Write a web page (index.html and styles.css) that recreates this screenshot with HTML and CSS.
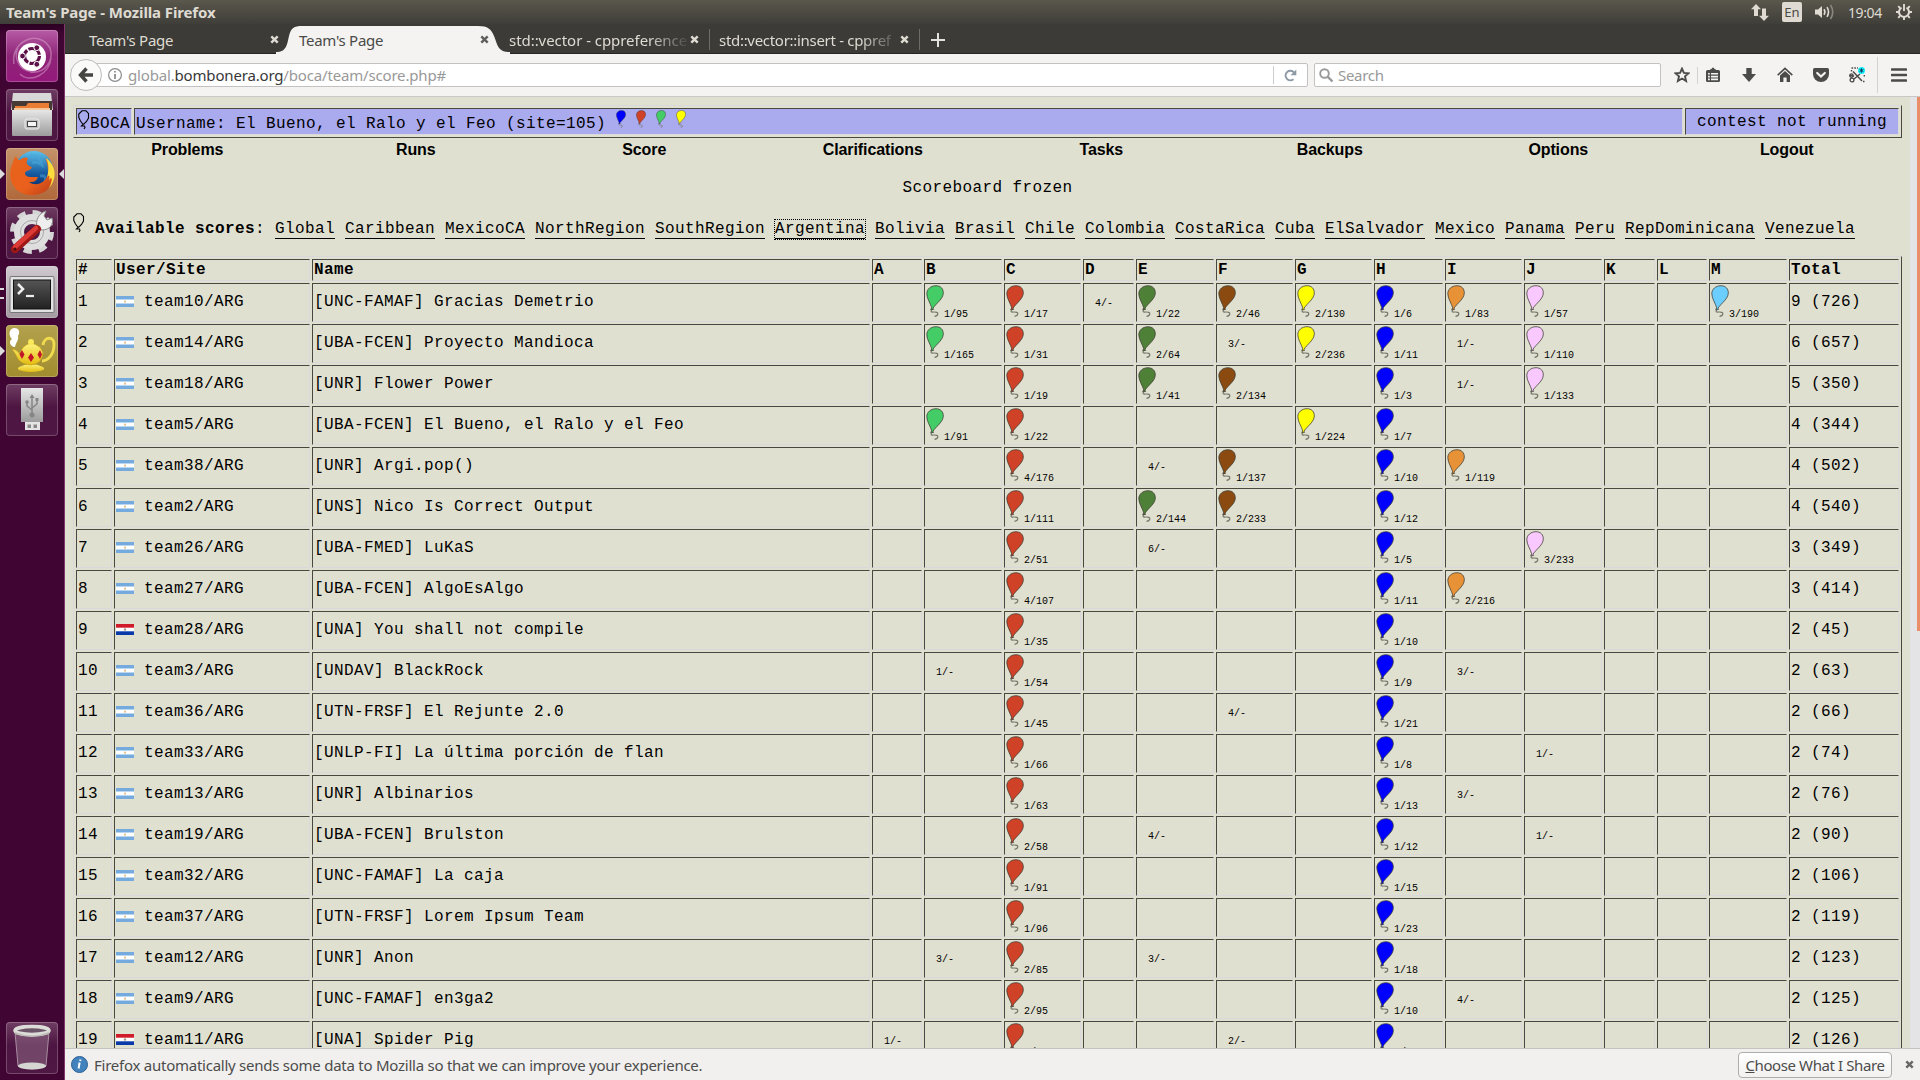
FILE: index.html
```html
<!DOCTYPE html>
<html lang="en">
<head>
<meta charset="utf-8">
<title>Team's Page - Mozilla Firefox</title>
<link rel="stylesheet" href="styles.css">
</head>
<body>
<svg class="defs" width="0" height="0" aria-hidden="true">
  <defs>
    <symbol id="balloon" viewBox="0 0 18 32">
      <path class="string" d="M6.500 24 5 26Q5 27.200 7.500 27Q12 26.800 11.800 28.800 11.500 31 8.500 31.300" fill="none" stroke="#77776c" stroke-width="1.200"/>
      <path d="M10 .7C14.5.7 17.5 3.6 17.3 8.2 17 14 10.5 18 7 23.2L7.6 24.4H4.6L5.8 23C4.3 18 .8 13.5.8 8.6.8 4 5 .7 10 .7Z" fill="currentColor" stroke="#3a3a30" stroke-opacity=".75" stroke-width="1"/>
    </symbol>
    <symbol id="outline-balloon" viewBox="0 0 12 20">
      <path d="M4 .8H8L10.5 3.5V8L8.5 11.5 6 14H4.8L2.5 11 .8 7.5V4Z M5.5 14 3.5 16H6.5L7 17.5 6 19" fill="none" stroke="#000" stroke-width="1.1"/>
    </symbol>
    <symbol id="flag-arg" viewBox="0 0 18 11">
      <rect width="18" height="11" fill="#74aade"/><rect y="3.5" width="18" height="4" fill="#fff"/><rect x="8" y="4.6" width="2" height="2" fill="#e8c48a"/>
    </symbol>
    <symbol id="flag-par" viewBox="0 0 18 11">
      <rect width="18" height="11" fill="#fff"/><rect width="18" height="3.7" fill="#d01c2a"/><rect y="7.3" width="18" height="3.7" fill="#0a3aa8"/><circle cx="9" cy="5.5" r="1.2" fill="#a98"/>
    </symbol>
    <symbol id="cross" viewBox="0 0 9 9">
      <path d="M1.3 1.3 7.7 7.7M7.7 1.3 1.3 7.7" stroke="currentColor" stroke-width="2.4"/>
    </symbol>
    <linearGradient id="silver" x2="0" y2="1"><stop stop-color="#e6e6e6"/><stop offset="1" stop-color="#9c9c9c"/></linearGradient>
    <linearGradient id="globe" x2="0" y2="1"><stop stop-color="#5cc0ea"/><stop offset=".6" stop-color="#15599f"/><stop offset="1" stop-color="#0a2a66"/></linearGradient>
    <linearGradient id="fox" x2="1" y2="1"><stop stop-color="#e8641c"/><stop offset=".6" stop-color="#e9601c"/><stop offset="1" stop-color="#b93a18"/></linearGradient>
    <linearGradient id="screen" x2="0" y2="1"><stop stop-color="#555"/><stop offset="1" stop-color="#222"/></linearGradient>
    <linearGradient id="gold" x2="0" y2="1"><stop stop-color="#fdf37c"/><stop offset="1" stop-color="#e3bb10"/></linearGradient>
  </defs>
</svg>

<header class="titlebar">
  <h1 class="window-title">Team's Page - Mozilla Firefox</h1>
  <div class="tray">
    <svg width="18" height="17" viewBox="0 0 18 17"><path d="M5 0 10 5.3H7V12H3V5.3H0ZM13 17 8 11.700H11V4.500H15V11.700H18Z" fill="#dfdbd2"/></svg>
    <span class="keyboard">En</span>
    <svg width="20" height="16" viewBox="0 0 20 16"><path d="M0 5.500H3L7 2V14L3 10.500H0Z" fill="#dfdbd2"/><path d="M9 5.200Q10.800 8 9 10.800M12 3.200Q15 8 12 12.800" fill="none" stroke="#dfdbd2" stroke-width="1.600"/><path d="M15.500 1Q20 8 15.500 15" fill="none" stroke="#8a8780" stroke-width="1.600"/></svg>
    <span class="clock">19:04</span>
    <svg width="16" height="16" viewBox="0 0 16 16" fill="none" stroke="#dfdbd2"><path d="M5.500 3.600A5 5 0 1 0 10.500 3.600" stroke-width="2"/><path d="M8 0V7" stroke-width="1.900"/><path d="M2.200 2.200 4 4M13.800 2.200 12 4M0 8H3M13 8H16M2.200 13.800 4 12M13.800 13.800 12 12M8 13V16" stroke-width="1.900"/></svg>
  </div>
</header>

<div class="desktop">
  <nav class="launcher">
    <div class="tile dash">
      <svg viewBox="0 0 52 52"><path d="M8 34C4 12 32-2 44 18M44 18C48 30 40 44 24 42M30 40C16 46 6 28 12 18M14 44C24 54 44 44 45 28" fill="none" stroke="#d79cca" stroke-opacity=".55" stroke-width="1.500"/><circle cx="26" cy="27" r="14" fill="#fff"/><circle cx="26" cy="26" r="7.500" fill="none" stroke="#5b1048" stroke-width="3.200" stroke-dasharray="14.200 1.500"/><g fill="#5b1048" stroke="#fff"><circle cx="16.500" cy="26" r="2.900"/><circle cx="30.800" cy="17.700" r="2.900"/><circle cx="30.800" cy="34.300" r="2.900"/></g></svg>
    </div>
    <div class="tile files">
      <svg viewBox="0 0 52 52"><path d="M7 4H45L47 21H5Z" fill="#d8d8d8"/><path d="M6 12H46V24H6Z" fill="#453a34"/><path d="M9 17H20L22 14H43V24H9Z" fill="#e87d33"/><path d="M8 19H44V24H8Z" fill="#f4c89d"/><path d="M6 21H46V46Q46 47 45 47H7Q6 47 6 46Z" fill="url(#silver)"/><rect x="19" y="30" width="14" height="10" rx="2" fill="#bdbdbd" stroke="#efefef"/><rect x="21.500" y="32.500" width="9" height="5" fill="#f5f5f5" stroke="#444"/></svg>
    </div>
    <div class="tile firefox running focused">
      <svg viewBox="0 0 52 52"><circle cx="28" cy="22" r="19" fill="url(#globe)"/><path d="M24 7Q35 8 36 17 31 13 26 15M34 28Q42 26 38 36" fill="none" stroke="#4aa7dc" stroke-width="3" opacity=".5"/><path d="M6 17C7 13 8 11 10 8 11 11 12 12 14 12 18 9 21 9 22 11 19 14 21 18 26 19 25 23 20 22 19 25 19 30 27 29 32 29 30 34 27 34 23 34 30 39 40 35 42 26 42 20 42 15 39 10 50 17 50 35 40 43 29 50 13 48 7 37 3 30 4 22 6 17Z" fill="url(#fox)"/><path d="M40 10C51 18 51 32 43 40 48 30 45 27 43 33 44 27 43 26 41 30 43 22 43 16 40 10Z" fill="#fbdc3c"/></svg>
    </div>
    <div class="tile settings">
      <svg viewBox="0 0 52 52"><circle cx="26" cy="25" r="19" fill="none" stroke="#d5d5d5" stroke-width="6" stroke-dasharray="8 6.920"/><circle cx="26" cy="25" r="13" fill="none" stroke="#dedede" stroke-width="10"/><circle cx="26" cy="25" r="11.500" fill="none" stroke="#aaa"/><path d="M31 21C29 13 33 6 40 4L38 9 41 13 46 11C48 17 44 23 36 23Z" fill="#eee" stroke="#8b8b8b"/><path d="M31 22 9 42" stroke="#9e1717" stroke-width="8" stroke-linecap="round"/><path d="M30 21 9 40" stroke="#dc3a35" stroke-width="4.500" stroke-linecap="round"/><circle cx="9" cy="42" r="1.500" fill="#4a0d0d"/></svg>
    </div>
    <div class="tile terminal running-two">
      <svg viewBox="0 0 52 52"><rect x="4" y="10.500" width="44" height="36" rx="1" fill="#e2e2e2" stroke="#777"/><rect x="7.500" y="14" width="37" height="29" fill="url(#screen)" stroke="#111"/><path d="M12 18 17 23 12 28" fill="none" stroke="#eee" stroke-width="2.500"/><path d="M20 30H28" stroke="#eee" stroke-width="2.200"/></svg>
    </div>
    <div class="tile lamp running">
      <svg viewBox="0 0 52 52"><path d="M8 22C3 20 3 16 6 14 2 10 3 4 8 3 14 3 14 8 12 11 13 15 10 17 9 22Z" fill="#fff"/><path d="M37 20C38 11 49 11 48 20 48 29 42 36 36 36" fill="none" stroke="#f0db4e" stroke-width="2.800"/><path d="M13 42Q25 36 37 42 42 46 25 47 8 46 13 42Z" fill="url(#gold)"/><path d="M6 24Q10 24 14 29 16 20 25 18 35 20 37 28 36 39 25 40 15 39 12 34 9 28 6 24Z" fill="url(#gold)" stroke="#c39b10" stroke-width=".600"/><circle cx="25" cy="17" r="3" fill="#f9e858"/><path d="M16 25 18.500 29.500 16 34 13.500 29.500ZM25 28 28 32.500 25 37 22 32.500ZM34 25 36 29.500 34 34 31.500 29.500Z" fill="#c31528"/></svg>
    </div>
    <div class="tile usb">
      <svg viewBox="0 0 52 52"><path d="M15 4H37V38H15Z" fill="url(#silver)"/><path d="M19 38H34V46H19Z" fill="#e4e4e4"/><path d="M21.500 40.500H25V44H21.500ZM27.500 40.500H31V44H27.500Z" fill="#888"/><path d="M26 12V30M26 26 21 22V18M26 24 31 20V16" fill="none" stroke="#858585" stroke-width="1.500"/><path d="M23.500 14 26 10 28.500 14ZM29.500 14H32.500V17H29.500Z" fill="#858585"/><circle cx="21" cy="18" r="1.800" fill="#858585"/><circle cx="26" cy="31" r="2.500" fill="#858585"/></svg>
    </div>
    <div class="tile trash">
      <svg viewBox="0 0 52 52"><path d="M9 10 12 44Q26 50 40 44L43 10" fill="#a88aa0" fill-opacity=".4" stroke="#b9a5b5" stroke-width=".800"/><ellipse cx="26" cy="8.500" rx="17" ry="4" fill="#6c5566" stroke="#dcdcd8" stroke-width="3.500"/><path d="M9 10Q26 17 43 10V12Q26 18 9 12Z" fill="#bdbdb8"/><ellipse cx="26" cy="44" rx="14" ry="3.500" fill="#d5d5d2"/></svg>
    </div>
  </nav>

  <main class="browser">
    <div class="tabs">
      <div class="tab"><span class="tab-label">Team's Page</span><svg class="close"><use href="#cross"/></svg></div>
      <div class="tab active">
        <svg class="tab-shape" viewBox="0 0 234 30" preserveAspectRatio="none"><path d="M0 28C11 28 11 20 13 12 15 4 18 2 26 2H202C212 2 215 5 218 12 222 22 222 28 234 28V30H0Z" fill="#f4f3f2"/></svg>
        <span class="tab-label">Team's Page</span><svg class="close"><use href="#cross"/></svg>
      </div>
      <div class="tab split"><span class="tab-label faded">std::vector - cppreference</span><svg class="close"><use href="#cross"/></svg></div>
      <div class="tab split"><span class="tab-label faded tight">std::vector::insert - cppref</span><svg class="close"><use href="#cross"/></svg></div>
      <svg class="plus" width="14" height="14" viewBox="0 0 14 14"><path d="M7 0V14M0 7H14" stroke="#e4e2dc" stroke-width="2"/></svg>
    </div>

    <div class="toolbar">
      <div class="back"><svg width="16" height="16" viewBox="0 0 16 16"><path d="M8.500 1.500 2.500 8 8.500 14.500M3 8H15" fill="none" stroke="#454541" stroke-width="3.400"/></svg></div>
      <div class="url">
        <svg width="14" height="14" viewBox="0 0 14 14"><circle cx="7" cy="7" r="6.400" fill="none" stroke="#8c8c8c" stroke-width="1.200"/><path d="M7 3V4.500M7 6V11" stroke="#777" stroke-width="1.500"/></svg>
        <span class="address">global.<b>bombonera.org</b>/boca/team/score.php#</span>
        <span class="reload"><svg width="13" height="13" viewBox="0 0 13 13"><path d="M9.500 10.200A4.800 4.800 0 1 1 10 3.500" fill="none" stroke="#8d9aa6" stroke-width="1.900"/><path d="M12.300.500V6.200H6.600Z" fill="#8d9aa6"/></svg></span>
      </div>
      <div class="search">
        <svg width="15" height="15" viewBox="0 0 15 15"><circle cx="5.500" cy="5.500" r="4.300" fill="none" stroke="#999" stroke-width="1.900"/><path d="M8.800 8.800 13.500 13.500" stroke="#999" stroke-width="2.400"/></svg>
        <span>Search</span>
      </div>
      <div class="actions">
        <svg viewBox="0 0 16 16"><path d="M8 1.600 9.900 5.900 14.600 6.300 11 9.400 12.100 14 8 11.500 3.900 14 5 9.400 1.400 6.300 6.100 5.900Z" fill="none" stroke="#4b4b49" stroke-width="1.900"/></svg>
        <i class="rule short"></i>
        <svg viewBox="0 0 16 16"><path d="M2.500 3H5Q5 2 6.500 2 6.800.500 8 .500T9.500 2Q11 2 11 3H13.500Q15 3 15 4.500V13.500Q15 15 13.500 15H2.500Q1 15 1 13.500V4.500Q1 3 2.500 3Z" fill="#4b4b49"/><path d="M3 6H4.800V7.600H3ZM6 6H13V7.600H6ZM3 8.800H4.800V10.400H3ZM6 8.800H13V10.400H6ZM3 11.600H4.800V13.200H3ZM6 11.600H13V13.200H6Z" fill="#f4f3f2"/></svg>
        <svg viewBox="0 0 16 16"><path d="M5.300 1H10.700V7H15L8 15 1 7H5.300Z" fill="#4b4b49"/></svg>
        <svg viewBox="0 0 16 16"><path d="M.700 8.200 8 1.400 15.300 8.200" fill="none" stroke="#4b4b49" stroke-width="1.600"/><path d="M3 8.600 8 4 13 8.600V15H9.600V10.500H6.400V15H3Z" fill="#4b4b49"/></svg>
        <svg viewBox="0 0 16 16"><path d="M1.500 1H14.500Q16 1 16 2.500V7A8 8 0 0 1 0 7V2.500Q0 1 1.500 1Z" fill="#4b4b49"/><path d="M4.200 6 8 9.600 11.800 6" fill="none" stroke="#f4f3f2" stroke-width="2.200" stroke-linecap="round"/></svg>
        <svg viewBox="0 0 16 16"><path d="M2.500 1H9M15.300 8V10M14 14.500H15.500M2.500 3V5" stroke="#4b4b49" stroke-width="1.400" stroke-dasharray="1.600 1.200"/><path d="M4 4.500 13 14M5 12 11 7M5 9.300 1 8.300" stroke="#4b4b49" stroke-width="1.500"/><circle cx="3" cy="13" r="1.900" fill="none" stroke="#4b4b49" stroke-width="1.300"/><circle cx="2.400" cy="8.600" r="1.700" fill="none" stroke="#4b4b49" stroke-width="1.300"/><circle cx="12.500" cy="3.500" r="3.500" fill="#0ef0f8"/><path d="M12.500 1.300V5.700M10.600 2.400 14.400 4.600M14.400 2.400 10.600 4.600" stroke="#1a3c60"/></svg>
        <i class="rule tall"></i>
        <svg viewBox="0 0 16 16"><path d="M1 2.500H15M1 8H15M1 13.500H15" stroke="#4b4b49" stroke-width="2.600" stroke-linecap="round"/></svg>
      </div>
    </div>

    <section class="viewport">
      <div class="page">
        <div class="banner">
          <div class="cell brand"><svg class="outline-balloon"><use href="#outline-balloon"/></svg>BOCA</div>
          <div class="cell user">Username: El Bueno, el Ralo y el Feo (site=105)<svg class="mini c-h"><use href="#balloon"/></svg><svg class="mini c-c"><use href="#balloon"/></svg><svg class="mini c-b"><use href="#balloon"/></svg><svg class="mini c-g"><use href="#balloon"/></svg></div>
          <div class="cell state">contest not running</div>
        </div>
        <nav class="menu">
          <a>Problems</a><a>Runs</a><a>Score</a><a>Clarifications</a><a>Tasks</a><a>Backups</a><a>Options</a><a>Logout</a>
        </nav>
        <p class="frozen">Scoreboard frozen</p>
        <p class="scores"><svg class="outline-balloon"><use href="#outline-balloon"/></svg><b>Available scores</b>: <a>Global</a> <a>Caribbean</a> <a>MexicoCA</a> <a>NorthRegion</a> <a>SouthRegion</a> <a class="current">Argentina</a> <a>Bolivia</a> <a>Brasil</a> <a>Chile</a> <a>Colombia</a> <a>CostaRica</a> <a>Cuba</a> <a>ElSalvador</a> <a>Mexico</a> <a>Panama</a> <a>Peru</a> <a>RepDominicana</a> <a>Venezuela</a></p>
        <table class="board">
          <colgroup><col class="w-rank"><col class="w-user"><col class="w-name"><col class="w50"><col class="w78"><col class="w77"><col class="w51"><col class="w78"><col class="w77"><col class="w77"><col class="w69"><col class="w77"><col class="w78"><col class="w51"><col class="w50"><col class="w78"><col class="w-total"></colgroup>
          <thead><tr><th>#</th><th>User/Site</th><th>Name</th><th>A</th><th>B</th><th>C</th><th>D</th><th>E</th><th>F</th><th>G</th><th>H</th><th>I</th><th>J</th><th>K</th><th>L</th><th>M</th><th>Total</th></tr></thead>
          <tbody id="teams"></tbody>
        </table>
      </div>
      <div class="scrollbar"><div class="thumb"></div></div>
    </section>

    <footer class="notice">
      <svg width="17" height="17" viewBox="0 0 17 17"><circle cx="8.500" cy="8.500" r="8" fill="#4283bd" stroke="#2c5f93"/><path d="M9.500 3.500 9.200 5M8.600 6.500 7.600 12.500" stroke="#fff" stroke-width="2"/></svg>
      <span class="notice-text">Firefox automatically sends some data to Mozilla so that we can improve your experience.</span>
      <button class="choose"><u>C</u>hoose What I Share</button>
      <svg class="close"><use href="#cross"/></svg>
    </footer>
  </main>
</div>
<script src="board.js"></script>
</body>
</html>
```
FILE: styles.css
```css
* { box-sizing: border-box; }
body {
  margin: 0;
  width: 1920px;
  height: 1080px;
  overflow: hidden;
  display: flex;
  flex-direction: column;
  font-family: "Noto Sans", "Open Sans", sans-serif;
  font-size: 15px;
}
.defs { position: absolute; }
svg { flex: none; }

/* top panel */
.titlebar {
  height: 24px;
  flex: none;
  display: flex;
  align-items: center;
  justify-content: space-between;
  padding: 0 8px 0 6px;
  background: linear-gradient(#5a574c, #3f3e39);
  color: #dfdbd2;
}
.window-title { margin: 0; font-size: 15px; line-height: 24px; font-weight: 700; letter-spacing: -.12px; }
.tray { display: flex; align-items: center; }
.keyboard {
  width: 20px; height: 20px; margin: 0 13px 0 13px;
  border-radius: 2px; background: #dfdbd2; color: #4a4944;
  font-size: 13px; line-height: 20px; text-align: center;
}
.clock { width: 35px; margin: 0 13px; font-size: 14px; letter-spacing: -.4px; white-space: nowrap; }

/* launcher */
.desktop { flex: 1; display: flex; min-height: 0; }
.launcher {
  width: 65px;
  flex: none;
  display: flex;
  flex-direction: column;
  gap: 7px;
  padding: 6px 0 6px 6px;
  background: linear-gradient(#2c0022, #400533 12px);
  border-right: 1px solid #80376c;
}
.tile {
  position: relative;
  width: 52px; height: 52px;
  flex: none;
  border-radius: 4px;
  background: linear-gradient(#6f3d63, #4d1541 45%, #4f1743);
  box-shadow: inset 0 0 0 1px rgba(255, 255, 255, .22);
}
.tile svg { display: block; width: 52px; height: 52px; }
.dash { background: linear-gradient(#b85ca6, #8d2577 50%, #95197c); }
.firefox { background: linear-gradient(#c4926a, #b0683a); }
.terminal { background: linear-gradient(#cfc8ce, #a39aa2); }
.lamp { background: linear-gradient(#b3a14e, #a18c2e); }
.trash { margin-top: auto; }
.running::before, .focused::after {
  content: "";
  position: absolute;
  top: 21px;
  border: 5px solid transparent;
}
.running::before { left: -6px; border-left-color: #dcdcdc; border-right-width: 0; }
.focused::after { right: -6px; border-right-color: #dcdcdc; border-left-width: 0; }
.running-two::before {
  content: "";
  position: absolute;
  left: -6px; top: 22px;
  width: 4px; height: 7px;
  border: solid #dcdcdc;
  border-width: 2px 0;
}

/* tabs */
.browser { flex: 1; min-width: 0; display: flex; flex-direction: column; }
.tabs {
  height: 30px;
  flex: none;
  display: flex;
  align-items: center;
  padding-left: 15px;
  background: #3c3b37;
  box-shadow: inset 0 -1px #252521;
  color: #dfdbd2;
}
.tab {
  position: relative;
  width: 210px;
  height: 30px;
  display: flex;
  align-items: center;
  justify-content: space-between;
  padding: 1px 11px 0 9px;
}
.active { color: #4a4a48; }
.tab-shape { position: absolute; left: -14px; top: 0; width: 234px; height: 30px; }
.tab-label { position: relative; white-space: nowrap; letter-spacing: -.28px; }
.faded {
  letter-spacing: -.05px;
  -webkit-mask: linear-gradient(to right, #000 140px, transparent 182px);
  mask: linear-gradient(to right, #000 140px, transparent 182px);
}
.tight { letter-spacing: -.3px; }
.split::after { content: ""; position: absolute; right: 0; top: 5px; width: 1px; height: 21px; background: #6d6c68; }
.close { position: relative; width: 9px; height: 9px; flex: none; }
.active .close { color: #5f5e5c; }
.plus { margin: 1px 0 0 11px; }

/* toolbar */
.toolbar {
  height: 43px;
  flex: none;
  display: flex;
  align-items: center;
  padding-left: 5px;
  background: #f4f3f2;
  border-bottom: 1px solid #c9c8c7;
}
.back {
  position: relative;
  z-index: 1;
  width: 32px; height: 32px;
  display: grid;
  place-items: center;
  border: 1px solid #bdbcbb;
  border-radius: 50%;
  background: #fafaf9;
}
.url, .search {
  height: 24px;
  display: flex;
  align-items: center;
  border: 1px solid #c3c2c1;
  background: #fff;
  color: #999;
  border-radius: 2px;
  line-height: 20px;
}
.url { width: 1216px; margin-left: -10px; padding-left: 15px; gap: 6px; }
.url b { font-weight: 400; color: #383838; }
.address { flex: 1; letter-spacing: -.17px; }
.reload { width: 34px; height: 18px; display: grid; place-items: center; border-left: 1px solid #ccc; }
.search { width: 347px; margin-left: 6px; padding-left: 4px; gap: 4px; letter-spacing: -.3px; }
.actions { flex: 1; display: flex; align-items: center; padding-left: 13px; }
.actions svg { width: 16px; height: 16px; }
.rule { width: 1px; background: #d3d2d1; }
.short { height: 17px; margin: 0 7px; }
.actions svg + svg { margin-left: 20px; }
.tall { height: 36px; margin: 0 13px 0 12px; }

/* page */
.viewport { flex: 1; min-height: 0; display: flex; overflow: hidden; }
.page {
  width: 1845px;
  flex: none;
  padding: 8px;
  background: #e0e0d0;
  color: #000;
  font: 16px/18px "Liberation Mono", monospace;
  letter-spacing: .398px;
}
.scrollbar { flex: 1; background: #e4e4e6; padding-left: 7px; }
.thumb { height: 534px; background: #ea8e6a; }
.banner {
  height: 33px;
  display: flex;
  gap: 2px;
  padding: 2px;
  border: 1px solid;
  border-color: #d9d9dc #484840 #484840 #d9d9dc;
}
.cell {
  height: 27px;
  padding: 0 1px;
  line-height: 30px;
  white-space: nowrap;
  background: #aaaaee;
  border: 1px solid;
  border-color: #484840 #d9d9dc #d9d9dc #484840;
}
.brand { width: 56px; }
.user { flex: 1; }
.state { width: 214px; text-align: center; line-height: 26px; }
.outline-balloon { width: 12px; height: 20px; vertical-align: -2px; }
.mini { width: 10px; height: 18px; margin-left: 10px; vertical-align: 0; }
.menu {
  display: grid;
  grid-template-columns: repeat(8, 1fr);
  width: 1828px;
  height: 22px;
  text-align: center;
  font: bold 16px/23px "Liberation Sans", Arial, sans-serif;
  letter-spacing: -.1px;
}
.frozen { margin: 19px 0 0; text-align: center; }
.scores { margin: 16px 0 0; height: 43px; line-height: 28px; white-space: nowrap; }
.scores .outline-balloon { margin-right: 10px; vertical-align: 0; }
.scores a { border-bottom: 1px solid #000; }
.scores .current { outline: 1px dotted #000; }

.board {
  width: 1829px;
  table-layout: fixed;
  border: 1px solid;
  border-color: #d9d9dc #484840 #484840 #d9d9dc;
  border-collapse: separate;
  border-spacing: 2px;
}
.board th, .board td {
  padding: 1px;
  border: 1px solid;
  border-color: #484840 #d9d9dc #d9d9dc #484840;
  text-align: left;
  white-space: nowrap;
}
.board th { height: 22px; }
.board td { height: 39px; padding-bottom: 3px; }
.board td.solved { vertical-align: top; line-height: 0; padding-bottom: 1px; }
.solved, .tried { letter-spacing: 0; }
.solved div { display: flex; align-items: baseline; height: 35px; line-height: 12px; }
.solved svg { width: 18px; height: 32px; }
.solved span, .tried span { font-size: 10px; }
.board td.tried { padding: 1px 1px 1px 11px; }
.flag { width: 18px; height: 11px; margin-right: 10px; vertical-align: -1px; }
.w-rank { width: 36px; } .w-user { width: 196px; } .w-name { width: 558px; }
.w50 { width: 50px; } .w51 { width: 51px; } .w69 { width: 69px; }
.w77 { width: 77px; } .w78 { width: 78px; } .w-total { width: 110px; }

/* balloon colours by problem */
.c-a { color: #fff; } .c-b { color: #44cc66; } .c-c { color: #cf4227; }
.c-e { color: #4f8038; } .c-f { color: #8b4a10; } .c-g { color: #ffff00; }
.c-h { color: #0000ff; } .c-i { color: #e89238; } .c-j { color: #f8c8ff; }
.c-m { color: #6cceff; }

/* notification */
.notice {
  height: 32px;
  flex: none;
  display: flex;
  align-items: center;
  padding: 0 6px 0 6px;
  background: #f1f0ee;
  border-top: 1px solid #c4c3c1;
  color: #4c4c4c;
}
.notice-text { margin-left: 6px; letter-spacing: -.25px; }
.choose {
  width: 154px; height: 26px;
  margin-left: auto;
  padding: 0;
  border: 1px solid #aeadab;
  border-radius: 4px;
  background: linear-gradient(#fff, #f2f1f0);
  color: #4c4c4c;
  font: 15px/20px "Noto Sans", sans-serif;
  letter-spacing: -.4px;
}
.notice .close { margin-left: 13px; color: #666; }
```
FILE: board.js
```js
const problems = 'ABCDEFGHIJKLM';

// team, country flag, name, attempts per problem, total
const teams = [
  ['team10', 'arg', '[UNC-FAMAF] Gracias Demetrio', { B: '1/95', C: '1/17', D: '4/-', E: '1/22', F: '2/46', G: '2/130', H: '1/6', I: '1/83', J: '1/57', M: '3/190' }, '9 (726)'],
  ['team14', 'arg', '[UBA-FCEN] Proyecto Mandioca', { B: '1/165', C: '1/31', E: '2/64', F: '3/-', G: '2/236', H: '1/11', I: '1/-', J: '1/110' }, '6 (657)'],
  ['team18', 'arg', '[UNR] Flower Power', { C: '1/19', E: '1/41', F: '2/134', H: '1/3', I: '1/-', J: '1/133' }, '5 (350)'],
  ['team5', 'arg', '[UBA-FCEN] El Bueno, el Ralo y el Feo', { B: '1/91', C: '1/22', G: '1/224', H: '1/7' }, '4 (344)'],
  ['team38', 'arg', '[UNR] Argi.pop()', { C: '4/176', E: '4/-', F: '1/137', H: '1/10', I: '1/119' }, '4 (502)'],
  ['team2', 'arg', '[UNS] Nico Is Correct Output', { C: '1/111', E: '2/144', F: '2/233', H: '1/12' }, '4 (540)'],
  ['team26', 'arg', '[UBA-FMED] LuKaS', { C: '2/51', E: '6/-', H: '1/5', J: '3/233' }, '3 (349)'],
  ['team27', 'arg', '[UBA-FCEN] AlgoEsAlgo', { C: '4/107', H: '1/11', I: '2/216' }, '3 (414)'],
  ['team28', 'par', '[UNA] You shall not compile', { C: '1/35', H: '1/10' }, '2 (45)'],
  ['team3', 'arg', '[UNDAV] BlackRock', { B: '1/-', C: '1/54', H: '1/9', I: '3/-' }, '2 (63)'],
  ['team36', 'arg', '[UTN-FRSF] El Rejunte 2.0', { C: '1/45', F: '4/-', H: '1/21' }, '2 (66)'],
  ['team33', 'arg', '[UNLP-FI] La última porción de flan', { C: '1/66', H: '1/8', J: '1/-' }, '2 (74)'],
  ['team13', 'arg', '[UNR] Albinarios', { C: '1/63', H: '1/13', I: '3/-' }, '2 (76)'],
  ['team19', 'arg', '[UBA-FCEN] Brulston', { C: '2/58', E: '4/-', H: '1/12', J: '1/-' }, '2 (90)'],
  ['team32', 'arg', '[UNC-FAMAF] La caja', { C: '1/91', H: '1/15' }, '2 (106)'],
  ['team37', 'arg', '[UTN-FRSF] Lorem Ipsum Team', { C: '1/96', H: '1/23' }, '2 (119)'],
  ['team12', 'arg', '[UNR] Anon', { B: '3/-', C: '2/85', E: '3/-', H: '1/18' }, '2 (123)'],
  ['team9', 'arg', '[UNC-FAMAF] en3ga2', { C: '2/95', H: '1/10', I: '4/-' }, '2 (125)'],
  ['team11', 'par', '[UNA] Spider Pig', { A: '1/-', C: '1/112', F: '2/-', H: '1/14' }, '2 (126)'],
];

function problemCell(letter, result) {
  if (!result) return '<td></td>';
  if (result.endsWith('-')) return `<td class="tried"><span>${result}</span></td>`;
  return `<td class="solved"><div><svg class="c-${letter.toLowerCase()}"><use href="#balloon"/></svg><span>${result}</span></div></td>`;
}

document.getElementById('teams').innerHTML = teams.map(([team, flag, name, results, total], i) =>
  `<tr><td>${i + 1}</td><td><svg class="flag"><use href="#flag-${flag}"/></svg>${team}/ARG</td><td>${name}</td>` +
  [...problems].map(p => problemCell(p, results[p])).join('') +
  `<td>${total}</td></tr>`).join('');
```
